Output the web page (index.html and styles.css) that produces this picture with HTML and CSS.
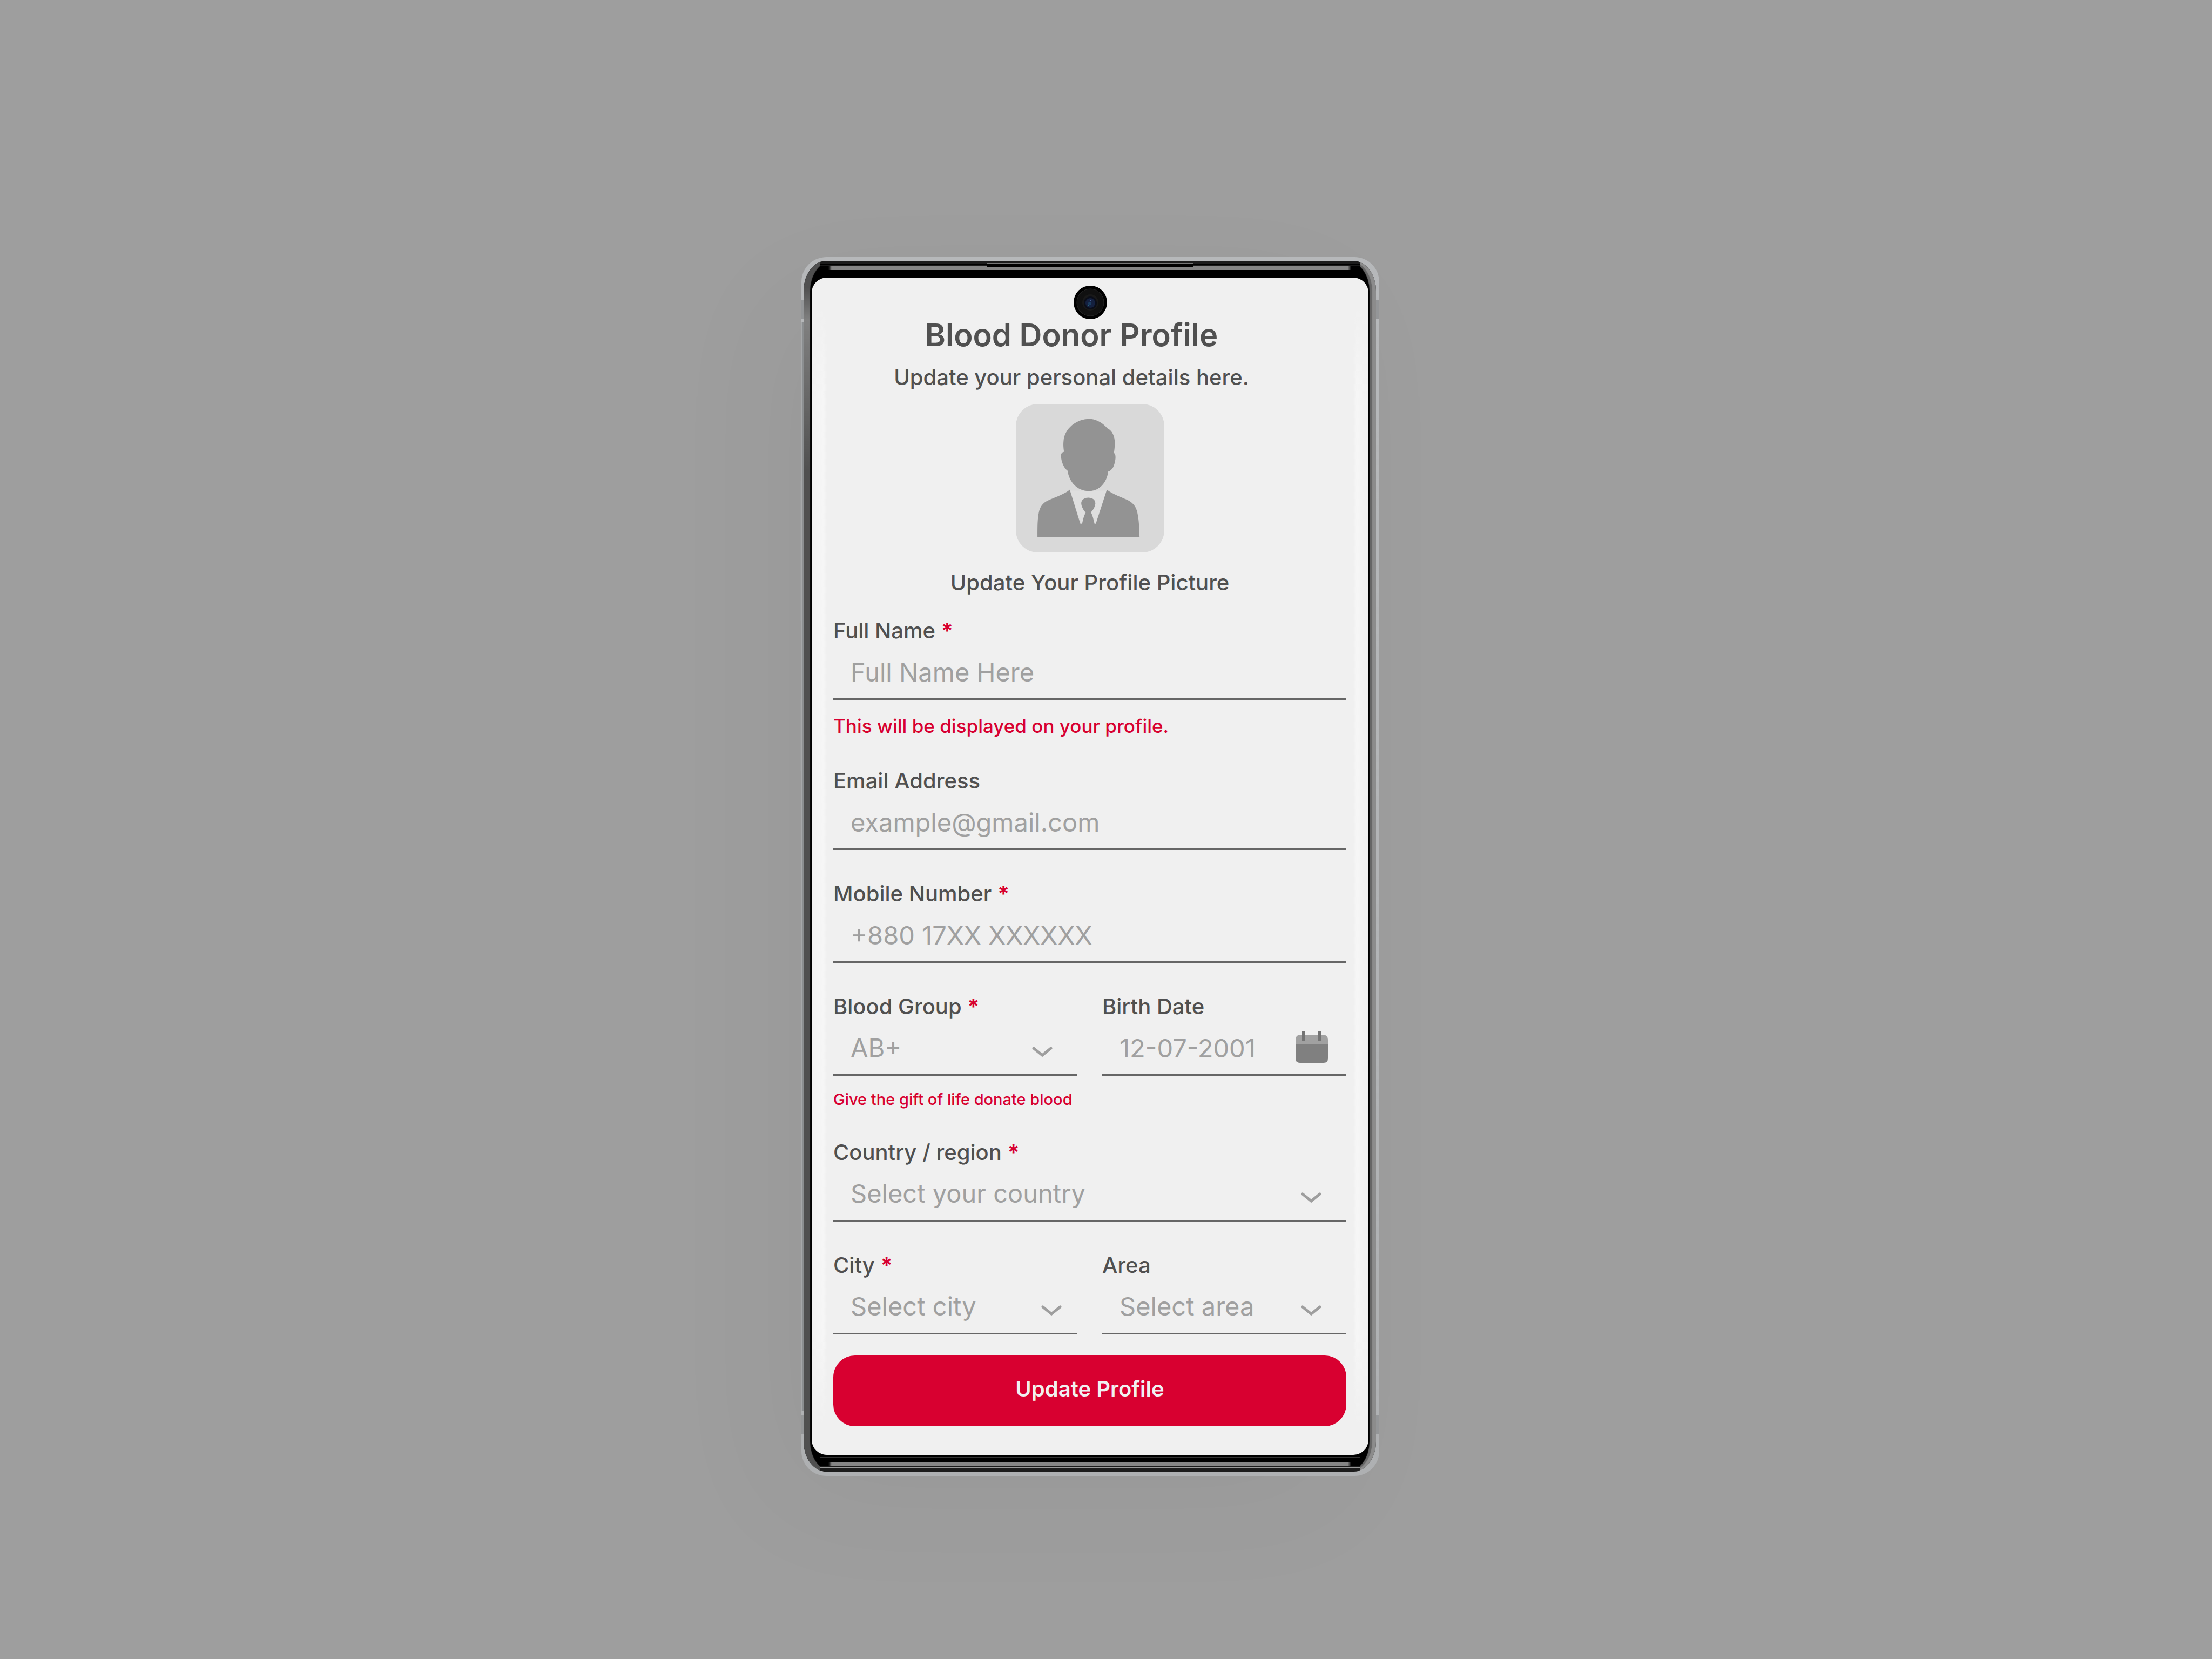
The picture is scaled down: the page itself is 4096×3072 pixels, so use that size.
FILE: index.html
```html
<!DOCTYPE html>
<html lang="en">
<head>
<meta charset="utf-8">
<title>Blood Donor Profile</title>
<meta name="viewport" content="width=device-width, initial-scale=1">
<link rel="stylesheet" href="styles.css">
</head>
<body>
<div class="stage">
  <div class="phone">
    <span class="side-key side-key-volume"></span>
    <span class="side-key side-key-power"></span>
    <span class="antenna antenna-top"></span>
    <span class="antenna antenna-bottom"></span>
    <div class="bezel">
      <span class="shine"></span>
      <span class="band band-top"></span>
      <span class="band band-bottom"></span>
      <span class="speaker"></span>
      <main class="screen">
        <svg class="camera" viewBox="0 0 62 62" aria-hidden="true">
          <circle cx="31" cy="31" r="31" fill="#000"/>
          <circle cx="31" cy="31" r="25" fill="#101010" stroke="#262626" stroke-width="1"/>
          <circle cx="31" cy="31" r="15" fill="#191919"/>
          <circle cx="31" cy="32" r="12" fill="#0a0d18"/>
          <circle cx="31" cy="32" r="9" fill="#14203f"/>
          <circle cx="30" cy="33" r="3" fill="#1b3c60"/>
          <circle cx="27" cy="37" r="1" fill="#2b7d8d"/>
          <circle cx="32" cy="28" r="1" fill="#5b74b5"/>
        </svg>

        <header class="heading">
          <h1 class="title">Blood Donor Profile</h1>
          <p class="subtitle">Update your personal details here.</p>
        </header>

        <figure class="picture">
          <svg class="avatar" viewBox="0 0 336 336" role="img" aria-label="Profile picture">
            <rect width="336" height="336" rx="50" fill="#d9d9d9"/>
            <path fill="#dfdfdf" d="M123 196L206 196L182 271H148Z"/>
            <g fill="#939393">
              <path d="M166 34C182 34 197 43 207 55C218 60 224 73 224 88C224 97 223 104 222 111C226 113 226 121 225 127C223 139 219 150 209 153C206 178 189 197 165 197C139 197 121 177 117 151C108 144 103 131 102 117C102 112 105 109 109 108C108 101 107 94 108 84C110 55 138 34 166 34Z"/>
              <path d="M49 301C49 275 49 262 52 246C55 230 64 222 76 217C94 209 110 204 122 194L146 271H150C152 262 154 253 158 246C153 240 148 232 148 224C149 216 156 212 164 212C172 212 180 216 180 225C179 233 175 240 170 245C174 253 176 262 178 271H181L206 194C219 204 236 210 252 217C264 223 272 231 275 246C279 264 279 280 280 301Z"/>
            </g>
          </svg>
          <figcaption class="caption">Update Your Profile Picture</figcaption>
        </figure>

        <form class="form">
          <div class="field">
            <label class="label" for="name">Full Name <span class="required">*</span></label>
            <input class="control" id="name" type="text" placeholder="Full Name Here">
            <p class="hint">This will be displayed on your profile.</p>
          </div>
          <div class="field">
            <label class="label" for="email">Email Address</label>
            <input class="control" id="email" type="email" placeholder="example@gmail.com">
          </div>
          <div class="field">
            <label class="label" for="mobile">Mobile Number <span class="required">*</span></label>
            <input class="control" id="mobile" type="tel" placeholder="+880 17XX XXXXXX">
          </div>
          <div class="row">
            <div class="field">
              <label class="label" for="blood">Blood Group <span class="required">*</span></label>
              <div class="select">
                <select class="control" id="blood"><option>AB+</option></select>
                <svg class="chevron" viewBox="0 0 38 20" aria-hidden="true"><path d="M3 3L19 16L35 3"/></svg>
              </div>
              <p class="hint hint-small">Give the gift of life donate blood</p>
            </div>
            <div class="field">
              <label class="label" for="birth">Birth Date</label>
              <div class="select">
                <input class="control" id="birth" type="text" placeholder="12-07-2001">
                <svg class="calendar" viewBox="0 0 60 58" aria-hidden="true">
                  <path fill="#808080" d="M0 22H60V50Q60 58 52 58H8Q0 58 0 50Z"/>
                  <path fill="#a1a1a1" d="M10 6H50Q60 6 60 15V23H0V15Q0 6 10 6Z"/>
                  <path fill="#737373" d="M12 0H18V17H12ZM42 0H48V17H42Z"/>
                </svg>
              </div>
            </div>
          </div>
          <div class="field">
            <label class="label" for="country">Country / region <span class="required">*</span></label>
            <div class="select">
              <select class="control" id="country"><option>Select your country</option></select>
              <svg class="chevron" viewBox="0 0 38 20" aria-hidden="true"><path d="M3 3L19 16L35 3"/></svg>
            </div>
          </div>
          <div class="row">
            <div class="field">
              <label class="label" for="city">City <span class="required">*</span></label>
              <div class="select">
                <select class="control" id="city"><option>Select city</option></select>
                <svg class="chevron chevron-near" viewBox="0 0 38 20" aria-hidden="true"><path d="M3 3L19 16L35 3"/></svg>
              </div>
            </div>
            <div class="field">
              <label class="label" for="area">Area</label>
              <div class="select">
                <select class="control" id="area"><option>Select area</option></select>
                <svg class="chevron" viewBox="0 0 38 20" aria-hidden="true"><path d="M3 3L19 16L35 3"/></svg>
              </div>
            </div>
          </div>
          <button class="submit" type="submit">Update Profile</button>
        </form>
      </main>
    </div>
  </div>
</div>
</body>
</html>
```
FILE: styles.css
```css
* {
  box-sizing: border-box;
}

body {
  margin: 0;
  background: #9e9e9e;
  color: #505050;
  font-family: Inter, "Liberation Sans", sans-serif;
  font-size: 40px;
  font-weight: 500;
  line-height: 48px;
}

h1, p, figure {
  margin: 0;
}

.stage {
  display: flex;
  justify-content: center;
  align-items: flex-start;
  min-height: 100vh;
  padding: 476px 58px 340px 0;
}

/* Phone shell */
.phone {
  position: relative;
  width: 100%;
  max-width: 1070px;
  padding: 7px 6px 8px 4px;
  border-radius: 46px;
  background:
    linear-gradient(90deg, #a6a8aa 1px, #8b8e90 1px, #8b8e90 4px, transparent 4px) 0 120px / 50% calc(100% - 240px) no-repeat,
    linear-gradient(#b6b8ba, #aeb0b2);
  box-shadow: -60px 60px 240px rgba(0, 0, 0, 0.03);
}

.side-key {
  position: absolute;
  left: -3px;
  width: 3px;
  border-right: 1px solid #55585b;
  background: #9b9d9e;
}

.side-key-volume {
  top: 414px;
  height: 260px;
}

.side-key-power {
  top: 818px;
  height: 133px;
}

.antenna {
  position: absolute;
  left: 0;
  right: 0;
  height: 34px;
  background: #949698;
}

.antenna-top {
  top: 80px;
}

.antenna-bottom {
  bottom: 78px;
}

.bezel {
  position: relative;
  padding: 31px 14px 31px 15px;
  overflow: hidden;
  border-radius: 42px / 56px;
  background: #000;
  box-shadow: inset 12px 0 1px #505050, inset -7px 0 1px #8c8c8c, inset -12px 0 1px #666;
}

/* Bright reflection at the top of the left rail */
.shine {
  position: absolute;
  top: 50px;
  left: 1px;
  width: 11px;
  height: 340px;
  background: linear-gradient(transparent, #808080 60px, #505050);
}

.band {
  position: absolute;
  left: 30px;
  right: 30px;
  height: 27px;
}

.band::after {
  content: "";
  position: absolute;
  top: 10px;
  left: 16px;
  right: 16px;
  height: 7px;
  background: linear-gradient(90deg, #000, #858585 6px, #858585 calc(100% - 6px), #000);
}

.band-top {
  top: 0;
  background: linear-gradient(#1c1c1c 6px, #000 6px, #000 7px, #999 7px, #999 8px, #1a1a1a 8px, #1a1a1a 10px, #000 10px, #000 26px, #333 26px);
}

.band-bottom {
  bottom: 0;
  background: linear-gradient(0deg, #1c1c1c 6px, #000 6px, #000 7px, #999 7px, #999 8px, #1a1a1a 8px, #1a1a1a 10px, #000 10px, #000 26px, #333 26px);
}

.speaker {
  position: absolute;
  top: 4px;
  left: 339px;
  right: 339px;
  height: 7px;
  border-top: 1px solid #777;
  background: #000;
}

/* Screen */
.screen {
  position: relative;
  padding: 72px 41px 53px 40px;
  border-radius: 28px;
  background: #f0f0f0;
}

.screen::before,
.screen::after {
  content: "";
  position: absolute;
  top: 60px;
  bottom: 60px;
  width: 28px;
}

.screen::before {
  left: 0;
  background: linear-gradient(#f0f0f0, transparent 160px, transparent calc(100% - 160px), #f0f0f0), linear-gradient(90deg, #f2f2f2, #f6f6f6 22px, #f0f0f0);
}

.screen::after {
  right: 0;
  background: linear-gradient(#f0f0f0, transparent 160px, transparent calc(100% - 160px), #f0f0f0), linear-gradient(270deg, #f2f2f2, #f6f6f6 22px, #f0f0f0);
}

.camera {
  position: absolute;
  top: 15px;
  left: calc(50% - 31px);
  width: 62px;
  height: 62px;
}

.heading {
  display: flex;
  flex-direction: column;
  gap: 21px;
  padding-right: 68px;
  text-align: center;
}

.title {
  font-size: 58px;
  font-weight: 600;
  line-height: 68px;
}

.picture {
  display: flex;
  flex-direction: column;
  align-items: center;
  gap: 32px;
  margin-top: 25px;
}

.avatar {
  width: 275px;
  height: 275px;
}

/* Form */
.form {
  display: flex;
  flex-direction: column;
  gap: 57px;
  margin-top: 41px;
}

.row {
  display: grid;
  grid-template-columns: 1fr 1fr;
  gap: 46px;
}

.field {
  display: flex;
  flex-direction: column;
  min-width: 0;
}

.required {
  color: #d80030;
  font-weight: 700;
}

.control {
  width: 100%;
  height: 104px;
  margin: 0;
  padding: 3px 32px 0;
  border: 0;
  border-bottom: 3px solid #666;
  border-radius: 0;
  outline: 0;
  appearance: none;
  background: transparent;
  color: #a0a0a0;
  font: 400 47px/58px Inter, "Liberation Sans", sans-serif;
}

.control::placeholder {
  color: #a0a0a0;
  opacity: 1;
}

.select {
  position: relative;
}

.chevron {
  position: absolute;
  right: 46px;
  bottom: 34px;
  width: 38px;
  height: 20px;
  fill: none;
  stroke: #9e9e9e;
  stroke-width: 5;
  stroke-linecap: round;
  pointer-events: none;
}

.chevron-near {
  right: 29px;
}

.calendar {
  position: absolute;
  right: 34px;
  bottom: 24px;
  width: 60px;
  height: 58px;
}

.hint {
  margin-top: 27px;
  color: #d80030;
  font-size: 35px;
  line-height: 42px;
}

.hint-small {
  font-size: 29px;
  line-height: 34px;
}

.submit {
  height: 131px;
  margin-top: -18px;
  padding: 0 0 8px;
  border: 0;
  border-radius: 40px;
  background: #d80030;
  color: #f0f0f0;
  font: 600 40px/48px Inter, "Liberation Sans", sans-serif;
}
```
